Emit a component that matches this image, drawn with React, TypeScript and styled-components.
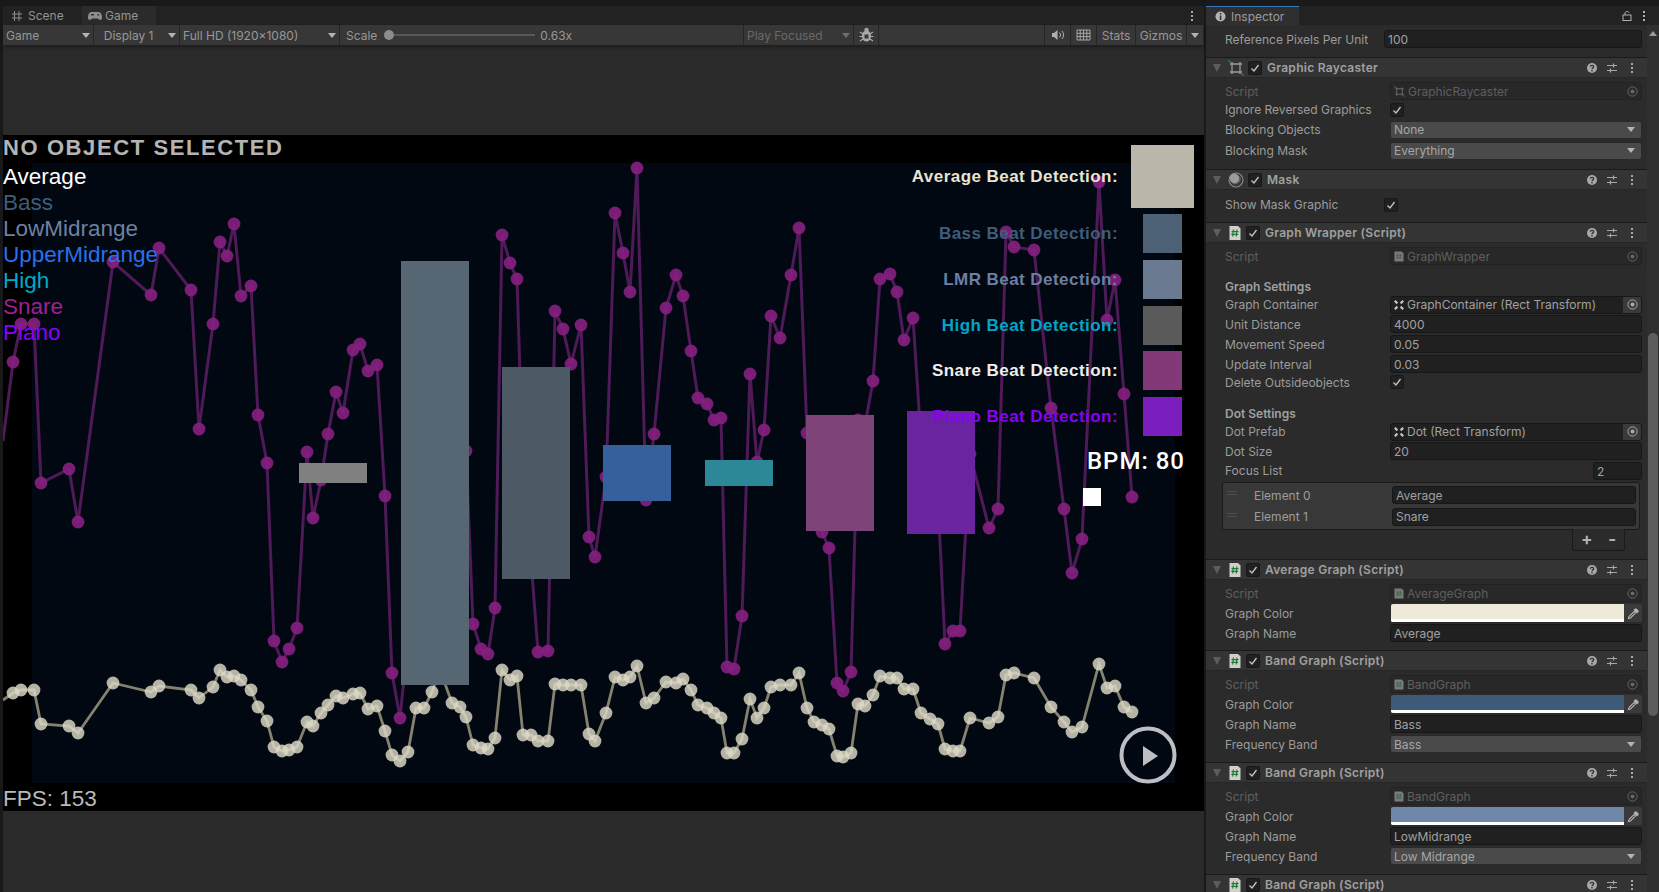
import React from "react";
import styled, { createGlobalStyle } from "styled-components";

const GlobalStyle = createGlobalStyle`
  html, body { margin: 0; padding: 0; background: #191919; overflow: hidden; }
  * { box-sizing: border-box; }
`;

// x, average level, snare level (page pixels)
const POINTS: [number, number, number][] = [
  [3,700,441],[13,693,362],[21,690,324],[34,690,324],[41,724,483],[69,726,469],[78,733,522],[113,683,262],
  [151,692,295],[159,686,248],[191,690,290],[199,698,429],[213,687,324],[220,670,242],[227,677,256],[234,676,224],
  [241,680,296],[251,690,286],[258,707,415],[267,721,463],[274,747,641],[282,751,662],[289,750,649],[297,747,628],
  [307,722,452],[313,726,518],[321,713,480],[328,705,434],[336,696,392],[343,698,413],[353,694,350],[360,693,344],
  [368,709,371],[377,706,365],[385,731,496],[392,755,673],[400,761,718],[408,752,640],[416,708,520],[424,708,440],
  [432,692,400],[440,670,480],[452,703,470],[460,707,440],[466,717,451],[473,745,624],[481,748,649],[488,749,654],
  [495,738,608],[502,670,235],[510,680,263],[517,676,279],[523,735,470],[531,735,560],[538,741,652],[548,741,651],
  [555,684,311],[563,685,329],[571,685,364],[581,685,325],[589,734,537],[595,741,557],[606,713,477],[615,677,213],
  [623,680,253],[630,677,292],[637,666,168],[646,703,500],[654,698,434],[666,682,308],[676,683,275],[683,679,296],
  [691,690,351],[698,705,398],[707,708,404],[714,713,420],[721,718,418],[727,753,667],[734,753,669],[742,739,616],
  [750,699,374],[757,718,462],[764,708,430],[771,687,316],[780,685,338],[791,685,275],[799,673,228],[807,708,433],
  [814,722,500],[822,725,532],[829,729,548],[837,756,683],[843,757,691],[851,753,672],[858,704,420],[865,706,425],
  [873,695,381],[880,676,279],[890,678,274],[897,678,292],[904,689,340],[913,689,318],[921,713,440],[930,719,450],
  [938,724,500],[945,749,644],[953,751,631],[960,751,631],[970,718,454],[989,723,528],[998,717,509],[1006,675,232],
  [1014,673,247],[1034,678,250],[1051,707,408],[1064,722,509],[1072,732,573],[1082,727,539],[1099,664,182],[1107,688,320],
  [1115,686,280],[1124,707,394],[1132,712,497],
];

const BARS = [
  { x: 299, y: 463, w: 68, h: 20, fill: "#808080" },
  { x: 401, y: 261, w: 68, h: 424, fill: "#566673" },
  { x: 502, y: 367, w: 68, h: 212, fill: "#4d5a66" },
  { x: 603, y: 445, w: 68, h: 56, fill: "#35609b" },
  { x: 705, y: 460, w: 68, h: 26, fill: "#2c8798" },
  { x: 806, y: 415, w: 68, h: 116, fill: "#7e4377" },
  { x: 907, y: 411, w: 68, h: 123, fill: "#6a24a0" },
];

const LEGEND = [
  ["Average", "#ffffff"],
  ["Bass", "#3f5d7a"],
  ["LowMidrange", "#6c82a3"],
  ["UpperMidrange", "#2a70ea"],
  ["High", "#00a9c8"],
  ["Snare", "#a01f96"],
  ["Piano", "#8a00ff"],
];

const BEATS = [
  { label: "Average Beat Detection:", color: "#e9e4d0", fill: "#bab6a9", w: 63, h: 63, gap: 6 },
  { label: "Bass Beat Detection:", color: "#3f5d7a", fill: "#4c6175", w: 39, h: 39, gap: 7 },
  { label: "LMR Beat Detection:", color: "#6b80a5", fill: "#6a7a91", w: 39, h: 39, gap: 7 },
  { label: "High Beat Detection:", color: "#00a5c8", fill: "#5a5a5a", w: 39, h: 39, gap: 6 },
  { label: "Snare Beat Detection:", color: "#eeeeee", fill: "#833878", w: 39, h: 39, gap: 7 },
  { label: "Piano Beat Detection:", color: "#8a00f5", fill: "#7a1fbd", w: 39, h: 39, gap: 0 },
];

const Page = styled.div`
  display: grid;
  grid-template-columns: 1204px 453px;
  column-gap: 2px;
  width: 1659px;
  height: 892px;
  padding-top: 6px;
  background: #191919;
  font-family: Inter, "Liberation Sans", sans-serif;
  font-size: 12px;
  color: #9c9c9c;
  overflow: hidden;
`;

const GamePane = styled.section`
  display: flex;
  flex-direction: column;
  min-width: 0;
  padding-left: 3px;
`;

const TabStrip = styled.div`
  display: flex;
  align-items: stretch;
  height: 19px;
  background: #222222;
`;

const Tab = styled.div<{ $active?: boolean; $w: number }>`
  display: flex;
  align-items: center;
  gap: ${(p) => (p.$active ? 3 : 5)}px;
  width: ${(p) => p.$w}px;
  padding-left: ${(p) => (p.$active ? 6 : 8)}px;
  background: ${(p) => (p.$active ? "#2b2b2b" : "transparent")};
  color: #949494;
`;

const TabFill = styled.div`
  flex: 1;
  display: flex;
  align-items: center;
  justify-content: flex-end;
  padding-right: 5px;
`;

const Toolbar = styled.div`
  display: flex;
  align-items: stretch;
  height: 20px;
  background: #373737;
  box-shadow: 0 2px 4px rgba(0, 0, 0, 0.35);
  position: relative;
  z-index: 1;
`;

const ToolItem = styled.div<{ $w: number; $dim?: boolean; $center?: boolean }>`
  display: flex;
  align-items: center;
  justify-content: ${(p) => (p.$center ? "center" : "space-between")};
  width: ${(p) => p.$w}px;
  padding: 0 3px;
  border-right: 1px solid #252525;
  color: ${(p) => (p.$dim ? "#696969" : "#989898")};
`;

const ToolSpacer = styled.div`
  flex: 1;
  border-right: 1px solid #252525;
`;

const ScaleTool = styled.div`
  display: flex;
  align-items: center;
  width: 404px;
  padding-left: 6px;
  border-right: 1px solid #252525;
  color: #989898;
`;

const Thumb = styled.span`
  width: 10px;
  height: 10px;
  margin-left: 7px;
  border-radius: 50%;
  background: #8c8c8c;
`;

const Track = styled.span`
  width: 141px;
  height: 2px;
  background: #585858;
`;

const ScaleValue = styled.span`
  margin-left: 5px;
`;

const Caret = styled.span<{ $dim?: boolean }>`
  width: 0;
  height: 0;
  border-left: 4px solid transparent;
  border-right: 4px solid transparent;
  border-top: 5px solid ${(p) => (p.$dim ? "#6f6f6f" : "#b4b4b4")};
`;

const Letterbox = styled.div`
  height: 90px;
  background: #2a2a2a;
`;

const GameCanvas = styled.div`
  position: relative;
  height: 676px;
  background: #000000;
  overflow: hidden;
`;

const Chart = styled.svg`
  position: absolute;
  inset: 0;
  width: 100%;
  height: 100%;
`;

const HudTitle = styled.div`
  position: absolute;
  left: 0;
  top: -1px;
  font: bold 22px/28px "Liberation Sans", sans-serif;
  letter-spacing: 1.6px;
  color: #b4b4b4;
  white-space: nowrap;
`;

const Legend = styled.div`
  position: absolute;
  left: 0;
  top: 29px;
  display: flex;
  flex-direction: column;
  font: 22.5px/26px "Liberation Sans", sans-serif;
`;

const LegendItem = styled.div<{ $color: string }>`
  color: ${(p) => p.$color};
`;

const BeatList = styled.div`
  position: absolute;
  right: 10px;
  top: 10px;
  display: flex;
  flex-direction: column;
  align-items: flex-end;
`;

const BeatRow = styled.div<{ $gap: number }>`
  display: flex;
  align-items: center;
  justify-content: flex-end;
  margin-bottom: ${(p) => p.$gap}px;
`;

const BeatLabel = styled.span<{ $color: string }>`
  color: ${(p) => p.$color};
  font: bold 17px/20px "Liberation Sans", sans-serif;
  letter-spacing: 0.45px;
  white-space: nowrap;
`;

const SwatchSlot = styled.span`
  display: flex;
  justify-content: center;
  width: 63px;
  margin-left: 13px;
`;

const Swatch = styled.span<{ $w: number; $h: number; $fill: string }>`
  width: ${(p) => p.$w}px;
  height: ${(p) => p.$h}px;
  background: ${(p) => p.$fill};
`;

const Bpm = styled.div`
  position: absolute;
  right: 19px;
  top: 310px;
  font: 500 24px/32px Roboto, sans-serif;
  letter-spacing: 1px;
  color: #ffffff;
`;

const BeatFlash = styled.div`
  position: absolute;
  left: 1080px;
  top: 353px;
  width: 18px;
  height: 18px;
  background: #ffffff;
`;

const PlayButton = styled.svg`
  position: absolute;
  left: 1116px;
  top: 591px;
  width: 58px;
  height: 58px;
`;

const Fps = styled.div`
  position: absolute;
  left: 0;
  bottom: -2px;
  font: 22.5px/28px "Liberation Sans", sans-serif;
  color: #b9b9b9;
`;

const BottomFill = styled.div`
  flex: 1;
  background: #2a2a2a;
`;

const InspectorPane = styled.aside`
  display: flex;
  flex-direction: column;
  min-height: 0;
`;

const InspectorTabs = styled.div`
  display: flex;
  align-items: stretch;
  height: 19px;
  flex: none;
  background: #222222;
`;

const InspectorTab = styled.div`
  display: flex;
  align-items: center;
  gap: 5px;
  width: 93px;
  padding-left: 9px;
  background: #2f2f2f;
  border-top: 1px solid #3a79bb;
`;

const TabIcons = styled.div`
  flex: 1;
  display: flex;
  align-items: center;
  justify-content: flex-end;
  gap: 5px;
  padding-right: 8px;
`;

const InspectorBody = styled.div`
  flex: 1;
  display: grid;
  grid-template-columns: 441px 12px;
  min-height: 0;
`;

const Sections = styled.div`
  background: #2b2b2b;
  overflow: hidden;
`;

const ScrollTrack = styled.div`
  position: relative;
  background: #2f2f2f;
`;

const ScrollArrow = styled.span`
  position: absolute;
  top: 6px;
  left: 2px;
  width: 0;
  height: 0;
  border-left: 4px solid transparent;
  border-right: 4px solid transparent;
  border-bottom: 5px solid #9a9a9a;
`;

const ScrollThumb = styled.div`
  position: absolute;
  top: 308px;
  left: 1px;
  width: 10px;
  height: 383px;
  border-radius: 5px;
  background: #5c5c5c;
`;

const SectionHeader = styled.div`
  display: flex;
  align-items: center;
  height: 21px;
  padding-right: 8px;
  background: #343434;
  border-top: 1px solid #1a1a1a;
  border-bottom: 1px solid #262626;
`;

const HeaderTitle = styled.span`
  flex: 1;
  margin-left: 5px;
  font-weight: 600;
  letter-spacing: 0.28px;
  color: #a0a0a0;
`;

const HeaderIcons = styled.span`
  display: flex;
  align-items: center;
  gap: 6px;
`;

const Fold = styled.span<{ $ml: number }>`
  flex: none;
  width: 0;
  height: 0;
  margin-left: ${(p) => p.$ml}px;
  margin-right: 7px;
  border-left: 4.5px solid transparent;
  border-right: 4.5px solid transparent;
  border-top: 8px solid #5d5d5d;
`;

const CheckBox = styled.span`
  flex: none;
  display: flex;
  align-items: center;
  justify-content: center;
  width: 14px;
  height: 14px;
  border-radius: 2px;
  background: #202020;
  border: 1px solid #181818;
`;

const HeaderCheck = styled(CheckBox)`
  margin-left: 4px;
`;

const SectionBody = styled.div<{ $pt?: number; $pb: number }>`
  display: flex;
  flex-direction: column;
  padding: ${(p) => p.$pt ?? 3}px 5px ${(p) => p.$pb}px 19px;
`;

const Row = styled.div<{ $h?: number; $mt?: number }>`
  display: flex;
  align-items: center;
  height: ${(p) => p.$h ?? 20}px;
  margin-top: ${(p) => p.$mt ?? 0}px;
`;

const Label = styled.span<{ $w?: number; $dim?: boolean }>`
  flex: none;
  width: ${(p) => p.$w ?? 165}px;
  color: ${(p) => (p.$dim ? "#5f5f5f" : "#9c9c9c")};
  white-space: nowrap;
`;

const GroupTitle = styled.span`
  font-weight: 600;
  color: #a0a0a0;
`;

const FieldBase = styled.div`
  flex: 1;
  display: flex;
  align-items: center;
  height: 18px;
  border-radius: 3px;
  white-space: nowrap;
  overflow: hidden;
`;

const TextField = styled(FieldBase)`
  padding-left: 3px;
  background: #202020;
  border: 1px solid #171717;
  color: #a0a0a0;
`;

const CountField = styled(TextField)`
  flex: 0 0 49px;
  margin: 2px 0 0 auto;
`;

const Dropdown = styled(FieldBase)`
  justify-content: space-between;
  padding: 0 6px 0 3px;
  background: #4a4a4a;
  border: 1px solid #2a2a2a;
  color: #a6a6a6;
`;

const ObjectField = styled(FieldBase)<{ $dim?: boolean }>`
  gap: 3px;
  padding-left: 3px;
  background: ${(p) => (p.$dim ? "#282828" : "#202020")};
  border: 1px solid ${(p) => (p.$dim ? "#222222" : "#171717")};
  color: ${(p) => (p.$dim ? "#5f5f5f" : "#a0a0a0")};
`;

const ObjectName = styled.span`
  flex: 1;
`;

const Picker = styled.span<{ $dim?: boolean }>`
  display: flex;
  align-items: center;
  justify-content: center;
  align-self: stretch;
  width: 18px;
  background: ${(p) => (p.$dim ? "transparent" : "#3a3a3a")};
`;

const ColorField = styled(FieldBase)`
  margin-left: 1px;
  background: #333333;
  border-radius: 2px;
`;

const ColorWell = styled.div<{ $color: string }>`
  flex: 1;
  align-self: stretch;
  border-bottom: 3px solid #ffffff;
  background: ${(p) => p.$color};
`;

const ElementBox = styled.div`
  display: flex;
  flex-direction: column;
  margin: 3px 2px 0 -3px;
  padding: 2px 3px 2px 3px;
  background: #383838;
  border: 1px solid #1a1a1a;
  border-radius: 3px;
  height: 48px;
`;

const Handle = styled.span`
  flex: none;
  width: 10px;
  height: 4px;
  margin: -4px 17px 0 1px;
  border-top: 1px solid #4f4f4f;
  border-bottom: 1px solid #4f4f4f;
`;

const ListFooter = styled.div`
  display: flex;
  align-items: center;
  justify-content: space-around;
  align-self: flex-end;
  width: 53px;
  height: 22px;
  margin: -1px 17px 0 0;
  padding-bottom: 2px;
  background: #2b2b2b;
  border: 1px solid #1a1a1a;
  border-top: none;
  border-radius: 0 0 3px 3px;
  font-size: 17px;
  font-weight: 700;
  color: #b0b0b0;
`;

const Svg = styled.svg`
  flex: none;
  display: block;
`;

function TickIcon() {
  return (
    <Svg width="10" height="10" viewBox="0 0 10 10">
      <path d="M1.5 5.5 L4 8 L8.5 2" fill="none" stroke="#c4c4c4" strokeWidth="1.3" />
    </Svg>
  );
}

function HelpIcon() {
  return (
    <Svg width="14" height="14" viewBox="0 0 14 14">
      <circle cx="7" cy="7" r="5" fill="#a8a8a8" />
      <path d="M5.3 5.8 C5.3 3.8 8.7 3.8 8.7 5.7 C8.7 6.9 7 6.9 7 8.2" fill="none" stroke="#343434" strokeWidth="1.3" />
      <rect x="6.3" y="9" width="1.4" height="1.4" fill="#343434" />
    </Svg>
  );
}

function PresetIcon() {
  return (
    <Svg width="14" height="14" viewBox="0 0 14 14">
      <path d="M2 4.5 H12 M2 9.5 H12 M8.5 2.5 V6.5 M5.5 7.5 V11.5" stroke="#a8a8a8" strokeWidth="1.2" fill="none" />
    </Svg>
  );
}

function KebabIcon({ color = "#a8a8a8" }: { color?: string }) {
  return (
    <Svg width="14" height="14" viewBox="0 0 14 14">
      <rect x="6" y="2" width="2" height="2" fill={color} />
      <rect x="6" y="6" width="2" height="2" fill={color} />
      <rect x="6" y="10" width="2" height="2" fill={color} />
    </Svg>
  );
}

function RayIcon({ size = 16, color = "#9a9a9a" }: { size?: number; color?: string }) {
  return (
    <Svg width={size} height={size} viewBox="0 0 16 16">
      <path d="M2 4 H14 M2 12 H14 M4 2 V14 M12 2 V14" stroke={color} strokeWidth="1.3" fill="none" />
      <path d="M0.5 0.5 L2.5 2.5 M13.5 13.5 L15.5 15.5" stroke="#5aa5c5" strokeWidth="1" />
    </Svg>
  );
}

function MaskIcon() {
  return (
    <Svg width="16" height="16" viewBox="0 0 16 16">
      <circle cx="8" cy="8" r="7" fill="none" stroke="#8c8c8c" strokeWidth="1.1" />
      <circle cx="6.5" cy="6.5" r="4.8" fill="#9c9c9c" />
      <path d="M11.5 4.5 A5 5 0 0 1 5 11.3" fill="none" stroke="#6a6a6a" strokeWidth="1.2" />
    </Svg>
  );
}

function ScriptIcon() {
  return (
    <Svg width="14" height="16" viewBox="0 0 14 16">
      <path d="M1.5 1 H10 L12.5 3.5 V15 H1.5 Z" fill="#cfcfcf" />
      <path d="M5.4 4.5 L4.7 11.5 M8.9 4.5 L8.2 11.5 M3.5 6.6 H10.5 M3.2 9.4 H10.2" stroke="#1f7a34" strokeWidth="1.2" fill="none" />
    </Svg>
  );
}

function SmallScriptIcon() {
  return (
    <Svg width="10" height="11" viewBox="0 0 10 11">
      <path d="M0.5 0.5 H7.5 L9.5 2.5 V10.5 H0.5 Z" fill="#7b7b7b" />
      <path d="M3.8 2.5 L3.4 8.5 M6.4 2.5 L6 8.5 M2.2 4.3 H7.8 M2 6.6 H7.6" stroke="#3a6a45" strokeWidth="0.9" fill="none" />
    </Svg>
  );
}

function TransformIcon() {
  return (
    <Svg width="10" height="10" viewBox="0 0 10 10">
      <path d="M0.8 0.8 L3.4 3.4 M9.2 0.8 L6.6 3.4 M0.8 9.2 L3.4 6.6 M9.2 9.2 L6.6 6.6" stroke="#c4c4c4" strokeWidth="2.2" fill="none" />
    </Svg>
  );
}

function TargetIcon({ dim }: { dim?: boolean }) {
  const color = dim ? "#666666" : "#aaaaaa";
  return (
    <Svg width="11" height="11" viewBox="0 0 11 11">
      <circle cx="5.5" cy="5.5" r="4.6" fill="none" stroke={color} strokeWidth="1" />
      <circle cx="5.5" cy="5.5" r="2" fill={color} />
    </Svg>
  );
}

function DropperIcon() {
  return (
    <Svg width="13" height="13" viewBox="0 0 13 13">
      <path d="M1.5 11.5 L2 9.5 L7 4.5 L8.5 6 L3.5 11 Z" fill="none" stroke="#b4b4b4" strokeWidth="1.1" />
      <path d="M6.5 3 L8 1.5 L9.5 1.5 L11.5 3.5 L11.5 5 L10 6.5 Z" fill="#b4b4b4" />
    </Svg>
  );
}

function HeaderTools() {
  return (
    <HeaderIcons>
      <HelpIcon />
      <PresetIcon />
      <KebabIcon />
    </HeaderIcons>
  );
}

function ScriptHeader({ title }: { title: string }) {
  return (
    <SectionHeader>
      <Fold $ml={7} />
      <ScriptIcon />
      <HeaderCheck><TickIcon /></HeaderCheck>
      <HeaderTitle>{title}</HeaderTitle>
      <HeaderTools />
    </SectionHeader>
  );
}

function ScriptRow({ name }: { name: string }) {
  return (
    <Row>
      <Label $dim>Script</Label>
      <ObjectField $dim>
        <SmallScriptIcon />
        <ObjectName>{name}</ObjectName>
        <Picker $dim><TargetIcon dim /></Picker>
      </ObjectField>
    </Row>
  );
}

function ColorRow({ color }: { color: string }) {
  return (
    <Row>
      <Label>Graph Color</Label>
      <ColorField>
        <ColorWell $color={color} />
        <Picker><DropperIcon /></Picker>
      </ColorField>
    </Row>
  );
}

function BandSection({ name, color, band }: { name: string; color: string; band: string }) {
  return (
    <>
      <ScriptHeader title="Band Graph (Script)" />
      <SectionBody $pb={8}>
        <ScriptRow name="BandGraph" />
        <ColorRow color={color} />
        <Row>
          <Label>Graph Name</Label>
          <TextField>{name}</TextField>
        </Row>
        <Row>
          <Label>Frequency Band</Label>
          <Dropdown>{band}<Caret /></Dropdown>
        </Row>
      </SectionBody>
    </>
  );
}

function App() {
  const snareLine = POINTS.map((p) => `${p[0]},${p[2]}`).join(" ");
  const averageLine = POINTS.map((p) => `${p[0]},${p[1]}`).join(" ");
  // the first point sits past the left edge of the graph, only its line shows
  const dots = POINTS.slice(1);

  return (
    <Page>
      <GlobalStyle />
      <GamePane>
        <TabStrip>
          <Tab $w={79}>
            <Svg width="12" height="12" viewBox="0 0 12 12">
              <path d="M3.5 1 V11 M8 1 V11 M1 4 H11 M1 8 H11" stroke="#8e8e8e" strokeWidth="1" fill="none" />
            </Svg>
            Scene
          </Tab>
          <Tab $active $w={74}>
            <Svg width="14" height="10" viewBox="0 0 14 10">
              <path d="M3.5 1 H10.5 C13 1 14 4 14 6.5 C14 9.5 11.5 9.5 10 7.5 H4 C2.5 9.5 0 9.5 0 6.5 C0 4 1 1 3.5 1 Z" fill="#8e8e8e" />
              <rect x="3" y="3" width="3" height="1.4" fill="#2b2b2b" />
              <rect x="9.5" y="3" width="1.6" height="1.6" fill="#2b2b2b" />
            </Svg>
            Game
          </Tab>
          <TabFill><KebabIcon /></TabFill>
        </TabStrip>
        <Toolbar>
          <ToolItem $w={91}>Game<Caret /></ToolItem>
          <ToolItem $w={86}>&nbsp;&nbsp;Display 1<Caret /></ToolItem>
          <ToolItem $w={160}>Full HD (1920x1080)<Caret /></ToolItem>
          <ScaleTool>
            Scale
            <Thumb />
            <Track />
            <ScaleValue>0.63x</ScaleValue>
          </ScaleTool>
          <ToolItem $w={110} $dim>Play Focused<Caret $dim /></ToolItem>
          <ToolItem $w={25} $center>
            <Svg width="15" height="16" viewBox="0 0 15 16">
              <ellipse cx="7.5" cy="9" rx="4.6" ry="5.5" fill="#a8a8a8" />
              <circle cx="7.5" cy="3" r="2.2" fill="#a8a8a8" />
              <path d="M1 5 L4 7 M14 5 L11 7 M0.5 9.5 H3 M14.5 9.5 H12 M1 14 L4 12 M14 14 L11 12" stroke="#a8a8a8" strokeWidth="1.2" />
              <rect x="5.5" y="7.5" width="4" height="4" fill="#373737" />
            </Svg>
          </ToolItem>
          <ToolSpacer />
          <ToolItem $w={26} $center>
            <Svg width="14" height="12" viewBox="0 0 14 12">
              <path d="M1 4 H3 L6.5 1 V11 L3 8 H1 Z" fill="#b0b0b0" />
              <path d="M8.5 3.5 A3.5 3.5 0 0 1 8.5 8.5 M11 2 A6 6 0 0 1 11 10" fill="none" stroke="#b0b0b0" strokeWidth="1" />
            </Svg>
          </ToolItem>
          <ToolItem $w={26} $center>
            <Svg width="15" height="12" viewBox="0 0 15 12">
              <path d="M1 1 H14 V11 H1 Z M1 4.3 H14 M1 7.6 H14 M4.2 1 V11 M7.5 1 V11 M10.8 1 V11" fill="none" stroke="#a8a8a8" strokeWidth="1" />
            </Svg>
          </ToolItem>
          <ToolItem $w={39} $center>Stats</ToolItem>
          <ToolItem $w={51} $center>Gizmos</ToolItem>
          <ToolItem $w={17} $center><Caret /></ToolItem>
        </Toolbar>
        <Letterbox />
        <GameCanvas>
          <Chart viewBox="3 135 1201 676" aria-hidden="true">
            <rect x="32" y="163" width="1143" height="620" fill="#020812" />
            <polyline points={snareLine} fill="none" stroke="#4f1a58" strokeWidth="3" />
            {dots.map((p) => (
              <circle key={`s${p[0]}`} cx={p[0]} cy={p[2]} r="6.4" fill="#84207f" opacity="0.92" />
            ))}
            <polyline points={averageLine} fill="none" stroke="#85836f" strokeWidth="2.8" />
            {dots.map((p) => (
              <circle key={`a${p[0]}`} cx={p[0]} cy={p[1]} r="6.4" fill="#dcd9c6" opacity="0.82" />
            ))}
            {BARS.map((b) => (
              <rect key={b.x} x={b.x} y={b.y} width={b.w} height={b.h} fill={b.fill} />
            ))}
          </Chart>
          <HudTitle>NO OBJECT SELECTED</HudTitle>
          <Legend>
            {LEGEND.map(([name, color]) => (
              <LegendItem key={name} $color={color}>{name}</LegendItem>
            ))}
          </Legend>
          <BeatList>
            {BEATS.map((b) => (
              <BeatRow key={b.label} $gap={b.gap}>
                <BeatLabel $color={b.color}>{b.label}</BeatLabel>
                <SwatchSlot>
                  <Swatch $w={b.w} $h={b.h} $fill={b.fill} />
                </SwatchSlot>
              </BeatRow>
            ))}
          </BeatList>
          <Bpm>BPM: 80</Bpm>
          <BeatFlash />
          <PlayButton viewBox="0 0 58 58" aria-hidden="true">
            <circle cx="29" cy="29" r="26.5" fill="none" stroke="#bdbdc2" strokeWidth="4" />
            <path d="M24 20 L39 30 L24 40 Z" fill="#bdbdc2" />
          </PlayButton>
          <Fps>FPS: 153</Fps>
        </GameCanvas>
        <BottomFill />
      </GamePane>

      <InspectorPane>
        <InspectorTabs>
          <InspectorTab>
            <Svg width="11" height="11" viewBox="0 0 11 11">
              <circle cx="5.5" cy="5.5" r="5" fill="#b4b4b4" />
              <rect x="4.8" y="2" width="1.5" height="1.5" fill="#2f2f2f" />
              <rect x="4.8" y="4.5" width="1.5" height="4.5" fill="#2f2f2f" />
            </Svg>
            Inspector
          </InspectorTab>
          <TabIcons>
            <Svg width="10" height="11" viewBox="0 0 10 11">
              <rect x="1" y="5" width="8" height="5.5" fill="none" stroke="#b0b0b0" strokeWidth="1" />
              <path d="M3 5 V3 C3 1 7 1 7 3" fill="none" stroke="#b0b0b0" strokeWidth="1" />
            </Svg>
            <KebabIcon color="#b0b0b0" />
          </TabIcons>
        </InspectorTabs>
        <InspectorBody>
          <Sections>
            <SectionBody $pt={4} $pb={8}>
              <Row>
                <Label $w={159}>Reference Pixels Per Unit</Label>
                <TextField>100</TextField>
              </Row>
            </SectionBody>

            <SectionHeader>
              <Fold $ml={7} />
              <RayIcon />
              <HeaderCheck><TickIcon /></HeaderCheck>
              <HeaderTitle>Graphic Raycaster</HeaderTitle>
              <HeaderTools />
            </SectionHeader>
            <SectionBody $pb={8}>
              <Row>
                <Label $dim>Script</Label>
                <ObjectField $dim>
                  <RayIcon size={11} color="#6f6f6f" />
                  <ObjectName>GraphicRaycaster</ObjectName>
                  <Picker $dim><TargetIcon dim /></Picker>
                </ObjectField>
              </Row>
              <Row $h={17}>
                <Label>Ignore Reversed Graphics</Label>
                <CheckBox><TickIcon /></CheckBox>
              </Row>
              <Row $h={21} $mt={1}>
                <Label>Blocking Objects</Label>
                <Dropdown>None<Caret /></Dropdown>
              </Row>
              <Row $h={21}>
                <Label>Blocking Mask</Label>
                <Dropdown>Everything<Caret /></Dropdown>
              </Row>
            </SectionBody>

            <SectionHeader>
              <Fold $ml={7} />
              <MaskIcon />
              <HeaderCheck><TickIcon /></HeaderCheck>
              <HeaderTitle>Mask</HeaderTitle>
              <HeaderTools />
            </SectionHeader>
            <SectionBody $pt={4} $pb={7}>
              <Row $h={21}>
                <Label $w={159}>Show Mask Graphic</Label>
                <CheckBox><TickIcon /></CheckBox>
              </Row>
            </SectionBody>

            <ScriptHeader title="Graph Wrapper (Script)" />
            <SectionBody $pb={8}>
              <ScriptRow name="GraphWrapper" />
              <Row $h={18} $mt={11}><GroupTitle>Graph Settings</GroupTitle></Row>
              <Row $h={19}>
                <Label>Graph Container</Label>
                <ObjectField>
                  <TransformIcon />
                  <ObjectName>GraphContainer (Rect Transform)</ObjectName>
                  <Picker><TargetIcon /></Picker>
                </ObjectField>
              </Row>
              <Row><Label>Unit Distance</Label><TextField>4000</TextField></Row>
              <Row><Label>Movement Speed</Label><TextField>0.05</TextField></Row>
              <Row><Label>Update Interval</Label><TextField>0.03</TextField></Row>
              <Row $h={16}>
                <Label>Delete Outsideobjects</Label>
                <CheckBox><TickIcon /></CheckBox>
              </Row>
              <Row $h={18} $mt={14}><GroupTitle>Dot Settings</GroupTitle></Row>
              <Row $h={19}>
                <Label>Dot Prefab</Label>
                <ObjectField>
                  <TransformIcon />
                  <ObjectName>Dot (Rect Transform)</ObjectName>
                  <Picker><TargetIcon /></Picker>
                </ObjectField>
              </Row>
              <Row><Label>Dot Size</Label><TextField>20</TextField></Row>
              <Row $h={18}>
                <Label>Focus List</Label>
                <CountField>2</CountField>
              </Row>
              <ElementBox>
                <Row $h={22}>
                  <Handle />
                  <Label $w={138}>Element 0</Label>
                  <TextField>Average</TextField>
                </Row>
                <Row $h={22} $mt={1}>
                  <Handle />
                  <Label $w={138}>Element 1</Label>
                  <TextField>Snare</TextField>
                </Row>
              </ElementBox>
              <ListFooter><span>+</span><span>-</span></ListFooter>
            </SectionBody>

            <ScriptHeader title="Average Graph (Script)" />
            <SectionBody $pb={7}>
              <ScriptRow name="AverageGraph" />
              <ColorRow color="#efe9d8" />
              <Row>
                <Label>Graph Name</Label>
                <TextField>Average</TextField>
              </Row>
            </SectionBody>

            <BandSection name="Bass" color="#3d5a78" band="Bass" />
            <BandSection name="LowMidrange" color="#6f88aa" band="Low Midrange" />
            <ScriptHeader title="Band Graph (Script)" />
          </Sections>
          <ScrollTrack>
            <ScrollArrow />
            <ScrollThumb />
          </ScrollTrack>
        </InspectorBody>
      </InspectorPane>
    </Page>
  );
}

export default App;
